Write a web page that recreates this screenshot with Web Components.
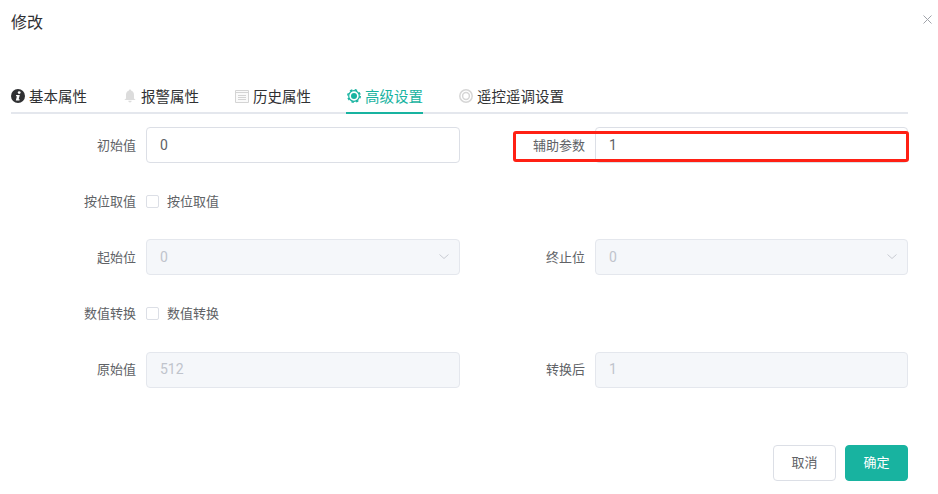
<!DOCTYPE html>
<html lang="zh">
<head>
<meta charset="utf-8">
<title>修改</title>
<style>
  html, body { margin: 0; background: #fff; }
  body { font-family: "Noto Sans CJK SC", "Noto Sans", sans-serif; }
</style>
</head>
<body>
<edit-dialog heading="修改">
  <tab-bar slot="tabs">
    <tab-item icon="info">基本属性</tab-item>
    <tab-item icon="bell">报警属性</tab-item>
    <tab-item icon="calendar">历史属性</tab-item>
    <tab-item icon="gear" active>高级设置</tab-item>
    <tab-item icon="target">遥控遥调设置</tab-item>
  </tab-bar>

  <form-row label="初始值"><text-box value="0"></text-box></form-row>
  <form-row label="辅助参数" marked><text-box value="1"></text-box></form-row>

  <form-row label="按位取值"><check-box>按位取值</check-box></form-row>
  <form-row></form-row>

  <form-row label="起始位"><text-box value="0" disabled select></text-box></form-row>
  <form-row label="终止位"><text-box value="0" disabled select></text-box></form-row>

  <form-row label="数值转换"><check-box>数值转换</check-box></form-row>
  <form-row></form-row>

  <form-row label="原始值"><text-box value="512" disabled></text-box></form-row>
  <form-row label="转换后"><text-box value="1" disabled></text-box></form-row>

  <action-button slot="footer">取消</action-button>
  <action-button slot="footer" primary>确定</action-button>
</edit-dialog>

<script>
const ICONS = {
  info: `<circle cx="7" cy="7" r="7" fill="#303133"/><circle cx="8.2" cy="3.6" r="1.4" fill="#fff"/><path d="M5.2 6h3.6L7.7 10.3h1l-.3 1.2H4.8L5.9 7.2h-1z" fill="#fff"/>`,
  bell: `<path d="M7 .5c.7 0 1.1.5 1.1 1.1C10.2 2.2 11 4 11 6v3.4l1.700 1.600H1.300L3 9.400V6c0-2 .8-3.800 2.900-4.400C5.900 1 6.300.5 7 .5z" fill="#dcdcdc"/><path d="M5.300 11.800h3.400C8.600 12.800 7.900 13.500 7 13.500s-1.600-.7-1.700-1.700z" fill="#dcdcdc"/>`,
  calendar: `<path d="M.5 1.500h13v12H.5z" fill="#fafafa" stroke="#d4d4d4"/><path d="M.5 3.500h13M3 6.500h8M3 8.500h8M3 10.500h8" fill="none" stroke="#d4d4d4"/>`,
  gear: `<circle cx="7" cy="7" r="5.300" fill="none" stroke="#18b3a0" stroke-width="1.200"/><circle cx="7" cy="7" r="6.200" fill="none" stroke="#18b3a0" stroke-width="1.500" stroke-dasharray="2.400 2.470"/><circle cx="7" cy="7" r="3" fill="#18b3a0"/>`,
  target: `<circle cx="7" cy="7" r="6.200" fill="none" stroke="#d6d6d6" stroke-width="1.500"/><circle cx="7" cy="7" r="3.400" fill="none" stroke="#d6d6d6" stroke-width="1.500"/>`
};

class EditDialog extends HTMLElement {
  constructor() {
    super();
    this.attachShadow({ mode: "open" });
    this.shadowRoot.innerHTML = `
      <style>
        :host { display: block; position: relative; width: 938px; height: 494px; box-sizing: border-box; padding: 10px 30px 0 11px; background: #fff; overflow: hidden; }
        header { height: 75px; font-size: 16px; line-height: 22px; color: #303133; }
        .close { position: absolute; top: 15px; right: 6px; width: 9px; height: 9px; }
        .grid { display: grid; grid-template-columns: 449px 448px; grid-auto-rows: 36px; row-gap: 20.2px; margin-top: 13px; }
        footer { display: flex; justify-content: flex-end; gap: 9px; margin-top: 57px; }
      </style>
      <header></header>
      <svg class="close" viewBox="0 0 9 9"><path d="M.5.500l8 8M8.500.500l-8 8" stroke="#a0a3aa" fill="none"/></svg>
      <slot name="tabs"></slot>
      <div class="grid"><slot></slot></div>
      <footer><slot name="footer"></slot></footer>`;
    this.shadowRoot.querySelector("header").textContent = this.getAttribute("heading");
  }
}

class TabBar extends HTMLElement {
  constructor() {
    super();
    this.attachShadow({ mode: "open" });
    this.shadowRoot.innerHTML = `
      <style>
        :host { display: flex; gap: 36px; height: 29px; box-sizing: border-box; border-bottom: 2px solid #e4e7ed; }
      </style>
      <slot></slot>`;
  }
}

class TabItem extends HTMLElement {
  constructor() {
    super();
    this.attachShadow({ mode: "open" });
    const active = this.hasAttribute("active");
    this.shadowRoot.innerHTML = `
      <style>
        :host { display: flex; align-items: center; gap: 4px; height: 29px; box-sizing: border-box; padding-bottom: 6px; font-size: 14.5px; color: ${active ? "#18b3a0" : "#303133"}; border-bottom: 2px solid ${active ? "#18b3a0" : "transparent"}; ${active ? "margin-left: -1px; padding-left: 1px;" : ""} }
        svg { width: 14px; height: 14px; flex: none; }
      </style>
      <svg viewBox="0 0 14 14">${ICONS[this.getAttribute("icon")]}</svg>
      <slot></slot>`;
  }
}

class FormRow extends HTMLElement {
  constructor() {
    super();
    this.attachShadow({ mode: "open" });
    const marked = this.hasAttribute("marked");
    this.shadowRoot.innerHTML = `
      <style>
        :host { display: grid; grid-template-columns: 125px 1fr; column-gap: 10px; align-items: center; position: relative; height: 36px; }
        .label { text-align: right; font-size: 13px; color: #606266; padding-bottom: 2px; }
        .mark { position: absolute; left: 53px; right: -1px; top: 4px; height: 31px; box-sizing: border-box; border: 3px solid #ff2014; border-radius: 3px; pointer-events: none; }
      </style>
      <span class="label"></span>
      <slot></slot>
      ${marked ? '<span class="mark"></span>' : ""}`;
    this.shadowRoot.querySelector(".label").textContent = this.getAttribute("label") || "";
  }
}

class TextBox extends HTMLElement {
  constructor() {
    super();
    this.attachShadow({ mode: "open" });
    const disabled = this.hasAttribute("disabled");
    const select = this.hasAttribute("select");
    this.shadowRoot.innerHTML = `
      <style>
        :host { display: flex; align-items: center; justify-content: space-between; height: 36px; box-sizing: border-box; padding: 0 14px 1px 13px; border: 1px solid ${disabled ? "#e4e7ed" : "#dcdfe6"}; border-radius: 4px; background: ${disabled ? "#f5f7fa" : "#fff"}; color: ${disabled ? "#c0c4cc" : "#606266"}; font-family: Roboto, sans-serif; font-size: 14px; }
        svg { width: 10px; height: 5px; margin-right: -4px; }
      </style>
      <span class="value"></span>
      ${select ? '<svg viewBox="0 0 10 5"><path d="M.5.500l4.500 4 4.500-4" fill="none" stroke="#c8ccd3"/></svg>' : ""}`;
    this.shadowRoot.querySelector(".value").textContent = this.getAttribute("value");
  }
}

class CheckBox extends HTMLElement {
  constructor() {
    super();
    this.attachShadow({ mode: "open" });
    this.shadowRoot.innerHTML = `
      <style>
        :host { display: flex; align-items: center; gap: 8px; font-size: 13px; color: #606266; }
        i { width: 13px; height: 13px; box-sizing: border-box; border: 1px solid #dcdfe6; border-radius: 2px; background: #fff; }
        span { padding-bottom: 2px; }
      </style>
      <i></i><span><slot></slot></span>`;
  }
}

class ActionButton extends HTMLElement {
  constructor() {
    super();
    this.attachShadow({ mode: "open" });
    const primary = this.hasAttribute("primary");
    this.shadowRoot.innerHTML = `
      <style>
        :host { display: flex; align-items: center; justify-content: center; width: 63px; height: 36px; box-sizing: border-box; padding-bottom: 2px; border: 1px solid ${primary ? "#18b3a0" : "#dcdfe6"}; border-radius: 4px; background: ${primary ? "#18b3a0" : "#fff"}; color: ${primary ? "#fff" : "#606266"}; font-size: 13px; }
      </style>
      <slot></slot>`;
  }
}

customElements.define("edit-dialog", EditDialog);
customElements.define("tab-bar", TabBar);
customElements.define("tab-item", TabItem);
customElements.define("form-row", FormRow);
customElements.define("text-box", TextBox);
customElements.define("check-box", CheckBox);
customElements.define("action-button", ActionButton);
</script>
</body>
</html>
